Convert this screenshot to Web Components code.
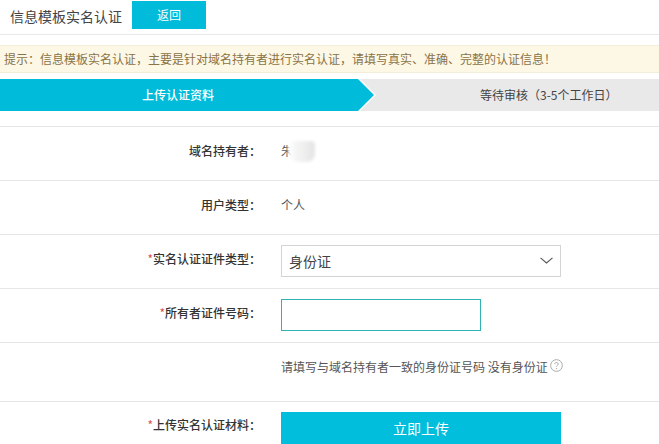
<!DOCTYPE html>
<html lang="zh">
<head>
<meta charset="utf-8">
<title>信息模板实名认证</title>
<style>
  html, body { margin: 0; background: #fff; }
  body { width: 659px; height: 444px; overflow: hidden; font: 12px "Noto Sans CJK SC", "Liberation Sans", sans-serif; color: #333; }
</style>
</head>
<body>
<page-header title-text="信息模板实名认证" action="返回"></page-header>
<notice-bar>提示：信息模板实名认证，主要是针对域名持有者进行实名认证，请填写真实、准确、完整的认证信息！</notice-bar>
<step-bar current="上传认证资料" next="等待审核（3-5个工作日）"></step-bar>
<form-row label="域名持有者：" height="54" text>朱<blur-patch></blur-patch></form-row>
<form-row label="用户类型：" height="54" text>个人</form-row>
<form-row label="实名认证证件类型：" required height="54"><select-box>身份证</select-box></form-row>
<form-row label="所有者证件号码：" required height="54"><text-box></text-box></form-row>
<form-row height="59" align="start"><hint-text>请填写与域名持有者一致的身份证号码 没有身份证</hint-text></form-row>
<form-row label="上传实名认证材料：" required height="43" align="start"><upload-button>立即上传</upload-button></form-row>

<script>
// small helper, every element just sets its markup in the shadow root
function shadow(el, html) {
    el.attachShadow({ mode: 'open' });
    el.shadowRoot.innerHTML = html;
}

class PageHeader extends HTMLElement {
    constructor() {
        super();
        shadow(this, `
        <style>
            :host { display: flex; height: 34px; border-bottom: 1px solid #e8e8e8; padding-left: 10px; }
            .title { font-size: 14px; line-height: 32px; color: #444; width: 122px; white-space: nowrap; }
            .btn { width: 74px; height: 28px; margin-top: 1px; background: #00bbd9; color: #fff; text-align: center; line-height: 28px; font-size: 12px; }
        </style>
        <div class="title"></div>
        <div class="btn"></div>`);
    }
    connectedCallback() {
        this.shadowRoot.querySelector('.title').textContent = this.getAttribute('title-text');
        this.shadowRoot.querySelector('.btn').textContent = this.getAttribute('action');
    }
}

class NoticeBar extends HTMLElement {
    constructor() {
        super();
        shadow(this, `
        <style>
            :host { display: block; margin-top: 10px; height: 28px; line-height: 25px; padding-left: 4px; background: #fdf8e6; border-top: 1px solid #f3eeda; border-bottom: 1px solid #f3eeda; box-sizing: border-box; color: #8a7347; font-size: 12px; white-space: nowrap; }
        </style>
        <slot></slot>`);
    }
}

class StepBar extends HTMLElement {
    constructor() {
        super();
        shadow(this, `
        <style>
            :host { display: flex; margin: 6px 0 15px; height: 32px; background: #e9e9e9; font-size: 12px; line-height: 32px; }
            .outline { width: 376px; height: 32px; background: #fff; clip-path: polygon(0 0, 360px 0, 376px 16px, 360px 32px, 0 32px); flex: none; }
            .cur { height: 32px; background: #00bbd9; color: #fff; text-align: center; width: 374px; padding-right: 18px; box-sizing: border-box; font-weight: 500;
                   clip-path: polygon(0 0, 358px 0, 374px 16px, 358px 32px, 0 32px); }
            .next { padding-left: 104px; color: #444; white-space: nowrap; }
        </style>
        <div class="outline"><div class="cur"></div></div>
        <div class="next"></div>`);
    }
    connectedCallback() {
        this.shadowRoot.querySelector('.cur').textContent = this.getAttribute('current');
        this.shadowRoot.querySelector('.next').textContent = this.getAttribute('next');
    }
}

class FormRow extends HTMLElement {
    constructor() {
        super();
        shadow(this, `
        <style>
            :host { display: flex; box-sizing: border-box; align-items: center; border-top: 1px solid #e6e6e6; padding-bottom: 2px; font-size: 12px; color: #555; }
            :host([align=start]) { align-items: flex-start; padding-bottom: 0; }
            .label { width: 261px; flex: none; text-align: right; color: #333; font-weight: 500; white-space: nowrap; margin-bottom: 4px; }
            .label i { color: #d9534f; font-style: normal; font-weight: 400; }
            .value { margin-left: 20px; }
            :host([text]) .value { margin-bottom: 4px; }
            :host([align=start]) .label { padding-top: 14px; margin-bottom: 0; }
            :host([align=start]) .value { padding-top: 10px; }
        </style>
        <div class="label"></div>
        <div class="value"><slot></slot></div>`);
    }
    connectedCallback() {
        this.style.height = this.getAttribute('height') + 'px';
        const label = this.shadowRoot.querySelector('.label');
        label.textContent = this.getAttribute('label') || '';
        if (this.hasAttribute('required')) {
            label.insertAdjacentHTML('afterbegin', '<i>*</i>');
        }
    }
}

// the blurred out part of the holder name, lies over the text
class BlurPatch extends HTMLElement {
    constructor() {
        super();
        shadow(this, `
        <style>
            :host { display: block; position: absolute; left: 288px; top: 141px; width: 27px; height: 21px; background: linear-gradient(90deg, #fff 0, #f4f4f4 35%, #e4e4e4 100%); border-radius: 6px 4px 8px 10px; filter: blur(1.5px); }
        </style>`);
    }
}

class SelectBox extends HTMLElement {
    constructor() {
        super();
        shadow(this, `
        <style>
            :host { display: flex; justify-content: space-between; align-items: center; width: 280px; height: 32px; box-sizing: border-box; border: 1px solid #d4d4d4; padding: 0 7px; font-size: 14px; line-height: 28px; color: #444; }
            svg { display: block; }
        </style>
        <slot></slot>
        <svg width="13" height="7" viewBox="0 0 13 7"><path d="M.5.8 6.5 6l6-5.2" fill="none" stroke="#555" stroke-width="1.1"/></svg>`);
    }
}

class TextBox extends HTMLElement {
    constructor() {
        super();
        shadow(this, `
        <style>
            :host { display: block; width: 200px; height: 32px; }
            input { display: block; width: 100%; height: 100%; box-sizing: border-box; margin: 0; border: 1px solid #2fb3b5; outline: none; background: #fff; padding: 0 8px; }
        </style>
        <input type="text">`);
    }
}

class HintText extends HTMLElement {
    constructor() {
        super();
        shadow(this, `
        <style>
            :host { display: flex; align-items: center; gap: 2px; height: 24px; margin-top: 1px; color: #555; font-size: 12px; white-space: nowrap; }
            svg { display: block; margin-top: -2px; }
        </style>
        <slot></slot>
        <svg width="13" height="13" viewBox="0 0 12 12">
            <circle cx="6" cy="6" r="5.4" fill="none" stroke="#a8a8a8" stroke-width=".9"/>
            <path d="M4.4 4.7C4.4 3.7 5.1 3.2 6 3.2s1.6.6 1.6 1.4c0 1.2-1.6 1.3-1.6 2.5" fill="none" stroke="#a8a8a8" stroke-width=".9"/>
            <circle cx="6" cy="8.8" r=".6" fill="#a8a8a8"/>
        </svg>`);
    }
}

class UploadButton extends HTMLElement {
    constructor() {
        super();
        shadow(this, `
        <style>
            :host { display: block; width: 280px; height: 33px; background: #00bedc; color: #fff; text-align: center; line-height: 33px; font-size: 14px; }
        </style>
        <slot></slot>`);
    }
}

customElements.define('page-header', PageHeader);
customElements.define('notice-bar', NoticeBar);
customElements.define('step-bar', StepBar);
customElements.define('form-row', FormRow);
customElements.define('blur-patch', BlurPatch);
customElements.define('select-box', SelectBox);
customElements.define('text-box', TextBox);
customElements.define('hint-text', HintText);
customElements.define('upload-button', UploadButton);
</script>
</body>
</html>
